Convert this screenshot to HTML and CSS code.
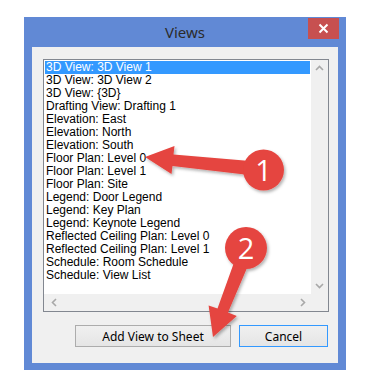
FILE: index.html
```html
<!DOCTYPE html>
<html>

<head>
  <title>Views</title>
  <link rel="stylesheet" href="styles.css">
</head>

<body>
  <div class="window">
    <div class="titlebar">
      <span></span>
      <span class="title">Views</span>
      <button class="close">
        <svg width="11" height="11" viewBox="0 0 11 11">
          <path d="M1.5 1.5 L9.5 9.5 M9.5 1.5 L1.5 9.5" stroke="#fff" stroke-width="2" />
        </svg>
      </button>
    </div>
    <div class="content">
      <div class="listbox">
        <ul class="items">
          <li class="selected">3D View: 3D View 1</li>
          <li>3D View: 3D View 2</li>
          <li>3D View: {3D}</li>
          <li>Drafting View: Drafting 1</li>
          <li>Elevation: East</li>
          <li>Elevation: North</li>
          <li>Elevation: South</li>
          <li>Floor Plan: Level 0</li>
          <li>Floor Plan: Level 1</li>
          <li>Floor Plan: Site</li>
          <li>Legend: Door Legend</li>
          <li>Legend: Key Plan</li>
          <li>Legend: Keynote Legend</li>
          <li>Reflected Ceiling Plan: Level 0</li>
          <li>Reflected Ceiling Plan: Level 1</li>
          <li>Schedule: Room Schedule</li>
          <li>Schedule: View List</li>
        </ul>
        <div class="vscroll">
          <svg width="17" height="17" viewBox="0 0 17 17"><path d="M5 10 L8.5 6.5 L12 10" class="chev" /></svg>
          <svg width="17" height="17" viewBox="0 0 17 17"><path d="M5 7 L8.5 10.5 L12 7" class="chev" /></svg>
        </div>
        <div class="hscroll">
          <svg width="17" height="17" viewBox="0 0 17 17"><path d="M10 5 L6.5 8.5 L10 12" class="chev" /></svg>
          <svg width="17" height="17" viewBox="0 0 17 17"><path d="M7 5 L10.5 8.5 L7 12" class="chev" /></svg>
        </div>
        <div class="corner"></div>
      </div>
      <div class="buttons">
        <button class="btn add">Add View to Sheet</button>
        <button class="btn cancel">Cancel</button>
      </div>
    </div>
  </div>

  <!-- callout arrows drawn over the dialog -->
  <svg class="callouts" width="367" height="390" viewBox="0 0 367 390">
    <defs>
      <filter id="shadow" x="-20%" y="-20%" width="140%" height="140%">
        <feDropShadow dx="1.5" dy="2" stdDeviation="1.5" flood-color="#000" flood-opacity="0.3" />
      </filter>
    </defs>
    <g filter="url(#shadow)" fill="#e5453f">
      <polygon points="145,157 174.5,146 173.5,154.5 250,161 249,175 172.5,166 171.5,174" />
      <circle cx="263.5" cy="170" r="20.5" />
      <polygon points="213,337 208.6,305.5 217.5,308.5 236,257 250,261 228,312.5 236.8,315.9" />
      <circle cx="246" cy="248" r="21" />
    </g>
    <text x="263.5" y="180.5" class="num">1</text>
    <text x="246" y="258.5" class="num">2</text>
  </svg>
</body>

</html>
```

FILE: styles.css
```css
body {
  margin: 0;
  padding: 17px 0 0 24px;
  background-color: #fff;
  font-family: 'Noto Sans', 'Liberation Sans', sans-serif;
  position: relative;
}

.window {
  width: 322px;
  box-sizing: border-box;
  background-color: #6189d5;
  padding: 0 8px 7px;
}

.titlebar {
  height: 30px;
  margin: 0 -8px;
  display: grid;
  grid-template-columns: 1fr auto 1fr;
  align-items: start;
}

.title {
  font-size: 15px;
  color: #2b2b2b;
  line-height: 30px;
}

.close {
  justify-self: end;
  margin: 1px 7px 0 0;
  width: 31px;
  height: 21px;
  border: none;
  padding: 0;
  background-color: #c75050;
  display: flex;
  align-items: center;
  justify-content: center;
}

.content {
  background-color: #f0f0f0;
  padding: 12px 9px 16px 11px;
}

.listbox {
  height: 253px;
  box-sizing: border-box;
  border: 1px solid #828790;
  background-color: #fff;
  display: grid;
  grid-template-columns: 1fr 17px;
  grid-template-rows: 1fr 17px;
}

.items {
  list-style: none;
  margin: 0;
  padding: 1px;
  font-family: 'Liberation Sans', sans-serif;
  font-size: 12px;
  color: #000;
}

.items li {
  height: 13px;
  line-height: 13px;
  padding-left: 1px;
  white-space: nowrap;
}

.items li.selected {
  background-color: #3399ff;
  color: #fff;
}

.vscroll {
  background-color: #f0f0f0;
  display: flex;
  flex-direction: column;
  justify-content: space-between;
}

.hscroll {
  background-color: #f0f0f0;
  display: flex;
  justify-content: space-between;
  padding: 0 0 0 2px;
}

.corner {
  background-color: #f0f0f0;
}

.chev {
  fill: none;
  stroke: #a8a8a8;
  stroke-width: 1.6;
}

.buttons {
  margin-top: 13px;
  display: flex;
  justify-content: flex-end;
  gap: 8px;
  padding-right: 1px;
}

.btn {
  height: 22px;
  padding: 0;
  border: 1px solid #acacac;
  background: linear-gradient(#f0f0f0, #e5e5e5);
  font-family: 'Noto Sans', 'Liberation Sans', sans-serif;
  font-size: 12px;
  color: #000;
}

.add {
  width: 156px;
}

.cancel {
  width: 89px;
  border-color: #3399ff;
}

.callouts {
  position: absolute;
  left: 0;
  top: 0;
  pointer-events: none;
}

.num {
  fill: #fff;
  font-family: 'Open Sans', 'Liberation Sans', sans-serif;
  font-size: 29px;
  text-anchor: middle;
}
```
